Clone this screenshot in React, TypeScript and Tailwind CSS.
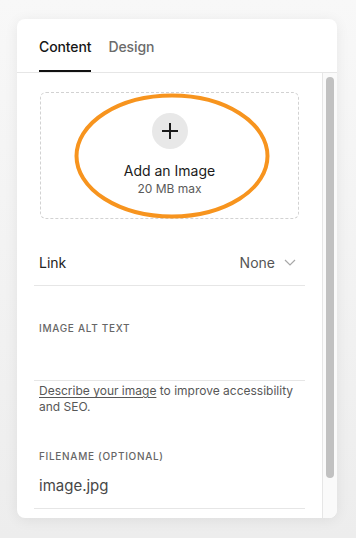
import React from 'react';

function PlusIcon() {
  return (
    <svg width="18" height="18" viewBox="0 0 18 18" fill="none" stroke="#1a1a1a" strokeWidth="2" strokeLinecap="butt">
      <path d="M9 1v16M1 9h16" />
    </svg>
  );
}

function Chevron() {
  return (
    <svg width="12" height="7" viewBox="0 0 12 7" fill="none" stroke="#a8a8a8" strokeWidth="1.2">
      <path d="M1 1l5 5 5-5" />
    </svg>
  );
}

export default function App() {
  return (
    <div className="w-[356px] h-[538px] bg-gradient-to-b from-[#f8f8f8] to-[#ededed] pt-[19px] pl-[17px] font-['Inter',sans-serif] overflow-hidden">
      <div className="w-[320px] h-[499px] bg-white rounded-lg shadow-[0_2px_14px_rgba(0,0,0,0.07)] overflow-hidden flex flex-col">
        {/* Tabs */}
        <div className="h-[54px] shrink-0 border-b border-[#e6e6e6] flex items-end gap-[17px] px-[22px]">
          <div className="h-[53px] pt-[18px] border-b-2 border-[#111] text-[14px] leading-5 font-medium text-[#161616] tracking-[-0.1px]">
            Content
          </div>
          <div className="h-[53px] pt-[18px] text-[14px] leading-5 font-medium text-[#6b6b6b] tracking-[-0.1px]">
            Design
          </div>
        </div>

        {/* Body */}
        <div className="flex flex-1 min-h-0">
          <div className="w-[305px] shrink-0 px-[17px] pt-[19px]">
            {/* Upload box */}
            <div className="relative mx-[6px] h-[127px] rounded-md border border-dashed border-[#d2d2d2] flex flex-col items-center pt-[20px]">
              <div className="w-9 h-9 rounded-full bg-[#e8e8e8] flex items-center justify-center">
                <PlusIcon />
              </div>
              <div className="mt-[12px] text-[14px] leading-5 text-[#1b1b1b]">Add an Image</div>
              <div className="text-[12px] leading-4 text-[#5a5a5a]">20 MB max</div>
              <svg className="absolute left-[33px] top-0 pointer-events-none" width="196" height="126" viewBox="0 0 196 126" fill="none">
                <ellipse cx="98" cy="63" rx="95.5" ry="60.5" stroke="#f7941e" strokeWidth="4" />
              </svg>
            </div>

            {/* Link row */}
            <div className="mt-[21px] h-[46px] border-b border-[#e6e6e6] flex items-center justify-between pl-[5px] pr-[9px]">
              <span className="text-[14px] text-[#222]">Link</span>
              <span className="flex items-center gap-[9px] text-[14px] text-[#555]">
                None
                <Chevron />
              </span>
            </div>

            {/* Alt text */}
            <div className="mt-[35px] pl-[5px] text-[10px] leading-[14px] font-medium tracking-[0.07em] text-[#666]">IMAGE ALT TEXT</div>
            <div className="h-[46px] border-b border-[#e6e6e6]" />
            <p className="mt-[2px] pl-[5px] pr-[5px] text-[12px] leading-4 text-[#575757]">
              <span className="underline underline-offset-2">Describe your image</span> to improve accessibility and SEO.
            </p>

            {/* Filename */}
            <div className="mt-[34px] pl-[5px] text-[10px] leading-[14px] font-medium tracking-[0.07em] text-[#666]">FILENAME (OPTIONAL)</div>
            <div className="mt-[13px] pl-[5px] pb-[12px] border-b border-[#e6e6e6] text-[15px] leading-5 text-[#474747]">image.jpg</div>
          </div>

          {/* Scrollbar */}
          <div className="flex-1 border-l border-[#e6e6e6] bg-[#fafafa] pl-[3px] pt-[4px]">
            <div className="w-2 h-[401px] rounded-full bg-[#c1c1c1]" />
          </div>
        </div>
      </div>
    </div>
  );
}
